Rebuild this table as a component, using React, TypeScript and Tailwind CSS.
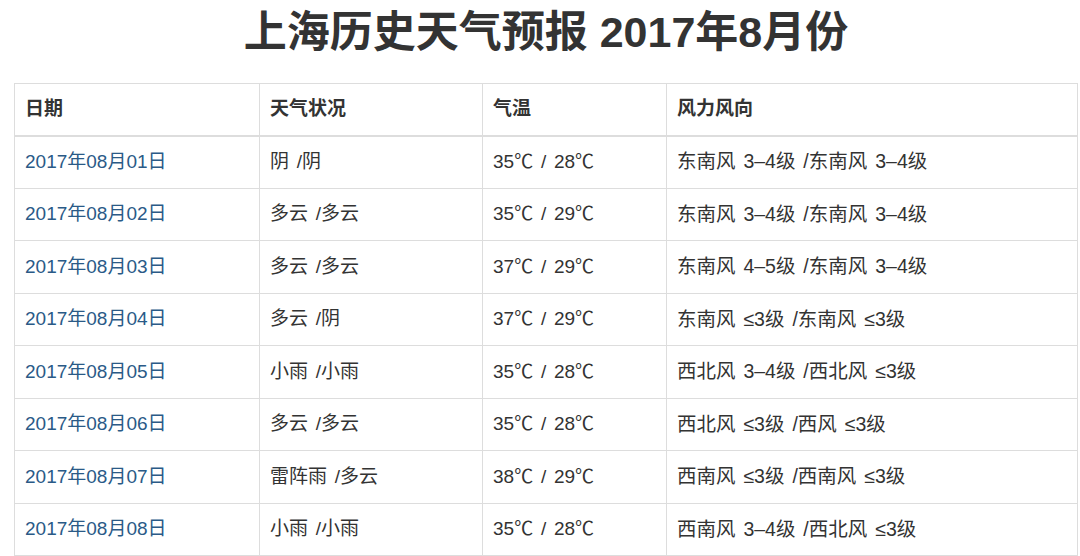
const rows = [
  ['2017年08月01日', '阴 /阴', '35℃ / 28℃', '东南风 3–4级 /东南风 3–4级'],
  ['2017年08月02日', '多云 /多云', '35℃ / 29℃', '东南风 3–4级 /东南风 3–4级'],
  ['2017年08月03日', '多云 /多云', '37℃ / 29℃', '东南风 4–5级 /东南风 3–4级'],
  ['2017年08月04日', '多云 /阴', '37℃ / 29℃', '东南风 ≤3级 /东南风 ≤3级'],
  ['2017年08月05日', '小雨 /小雨', '35℃ / 28℃', '西北风 3–4级 /西北风 ≤3级'],
  ['2017年08月06日', '多云 /多云', '35℃ / 28℃', '西北风 ≤3级 /西风 ≤3级'],
  ['2017年08月07日', '雷阵雨 /多云', '38℃ / 29℃', '西南风 ≤3级 /西南风 ≤3级'],
  ['2017年08月08日', '小雨 /小雨', '35℃ / 28℃', '西南风 3–4级 /西北风 ≤3级'],
];

const font = { fontFamily: '"Liberation Sans", "Noto Sans CJK SC", sans-serif' };

export default function App() {
  return (
    <div className="w-[1080px] h-[556px] overflow-hidden bg-white text-[#333]" style={font}>
      <h1 className="pt-[8px] pl-[12px] h-[83px] text-center text-[43px] leading-[49px] font-bold text-[#333]">
        上海历史天气预报 2017年8月份
      </h1>
      <div className="pl-[14px] pr-[2px]">
        <table className="w-[1064px] border-collapse table-fixed text-[19px] [word-spacing:2.5px]">
          <colgroup>
            <col className="w-[245px]" />
            <col className="w-[223px]" />
            <col className="w-[184px]" />
            <col />
          </colgroup>
          <thead>
            <tr className="h-[52px]">
              {['日期', '天气状况', '气温', '风力风向'].map((h) => (
                <th
                  key={h}
                  className="border border-[#ddd] border-b-2 px-[10px] text-left font-bold align-middle"
                >
                  {h}
                </th>
              ))}
            </tr>
          </thead>
          <tbody>
            {rows.map((r) => (
              <tr key={r[0]} className="h-[52.5px]">
                <td className="border border-[#ddd] px-[10px] text-[#2a5a87] align-middle">{r[0]}</td>
                <td className="border border-[#ddd] px-[10px] align-middle">{r[1]}</td>
                <td className="border border-[#ddd] px-[10px] align-middle">{r[2]}</td>
                <td className="border border-[#ddd] px-[10px] text-[19.5px] align-middle">{r[3]}</td>
              </tr>
            ))}
          </tbody>
        </table>
      </div>
    </div>
  );
}
